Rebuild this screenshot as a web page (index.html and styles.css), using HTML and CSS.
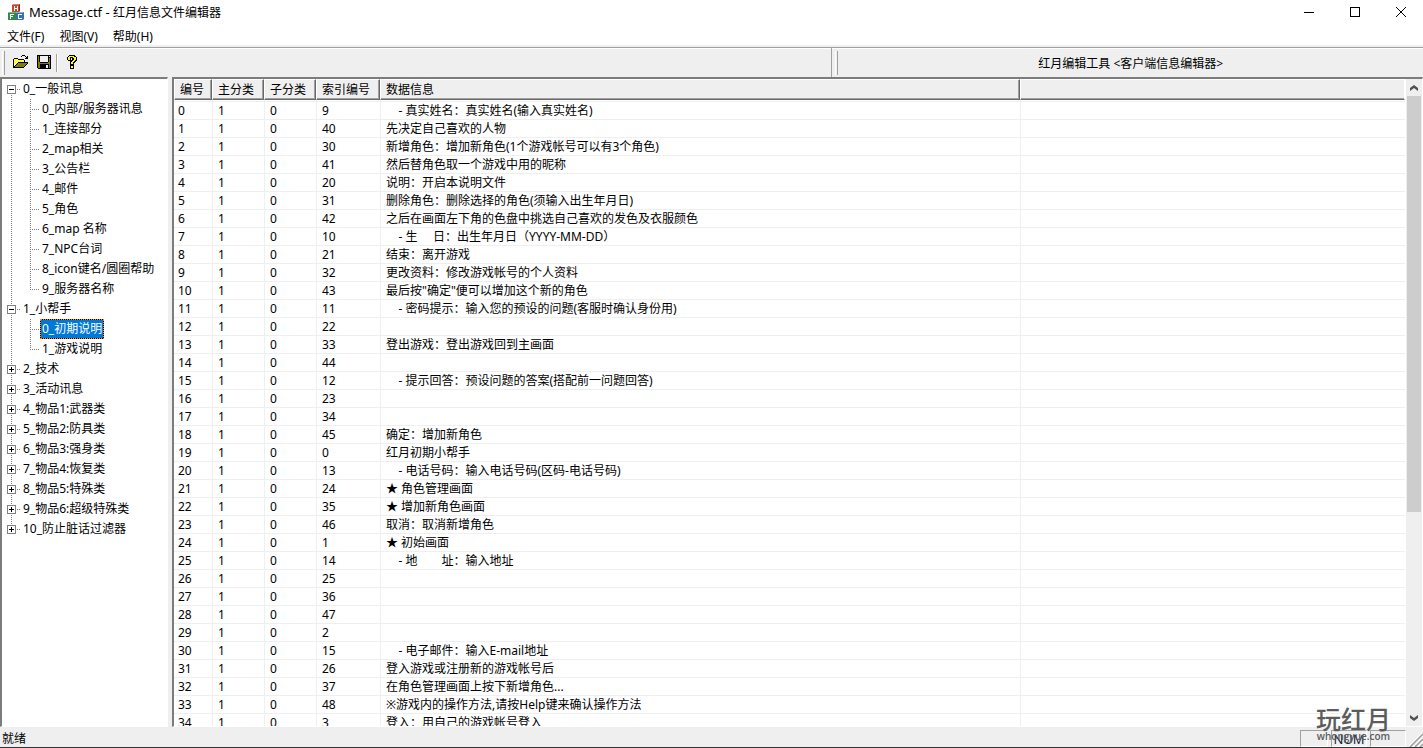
FILE: index.html
```html
<!DOCTYPE html>
<html lang="zh-CN">
<head>
<meta charset="utf-8">
<title>Message.ctf - 红月信息文件编辑器</title>
<link rel="stylesheet" href="styles.css">
</head>
<body>
<div class="app">
  <header class="titlebar">
    <svg class="app-icon" width="16" height="16" viewBox="0 0 16 16" aria-hidden="true">
      <path fill="#c4472f" d="M4 1l2-1h6l-1 8H4z"/><path fill="#e8775a" d="M4 1l2-1h6l-1 1z"/><path fill="#8b2a1d" d="M11 1l1-1v7l-1 1z"/>
      <path fill="#fff" d="M6 2h1v2h2V2h1v5H9V5H7v2H6z"/>
      <path fill="#2f8b4c" d="M0 9l1-1h7v8H0z"/><path fill="#74bd83" d="M0 9l1-1h7l-1 1z"/>
      <path fill="#fff" d="M2 10h4v1H3v1h2v1H3v2H2z"/>
      <path fill="#3471b5" d="M8 9l1-1h7v7l-1 1H8z"/><path fill="#81aedb" d="M8 9l1-1h7l-1 1z"/>
      <path fill="#fff" d="M10 10h4v1h-3v3h3v1h-4z"/>
    </svg>
    <h1 class="title"><span class="file-name">Message.ctf - </span>红月信息文件编辑器</h1>
    <div class="window-buttons">
      <button class="window-button" aria-label="最小化"><svg width="10" height="10" viewBox="0 0 10 10"><path d="M0 5.5h10"/></svg></button>
      <button class="window-button" aria-label="最大化"><svg width="10" height="10" viewBox="0 0 10 10"><path d="M.5.5h9v9h-9z"/></svg></button>
      <button class="window-button smooth" aria-label="关闭"><svg width="10" height="10" viewBox="0 0 10 10"><path d="M0 0l10 10M10 0L0 10"/></svg></button>
    </div>
  </header>
  <nav class="menubar">
    <button>文件(F)</button><button>视图(V)</button><button>帮助(H)</button>
  </nav>
  <div class="rebar">
    <div class="band tools">
      <span class="grip"></span>
      <button class="tool" aria-label="打开"><svg width="16" height="16" viewBox="0 0 16 16">
        <path fill="#ffff80" d="M1 4h4v1h6v3H4l-3 5z"/>
        <path stroke="#ffff00" stroke-dasharray="1 1" d="M1 5.5h10M2 6.5h9M1 7.5h10M2 8.5h3M1 9.5h3"/>
        <path fill="#808000" d="M5 9h9l-4 4H2z"/>
        <path stroke="#000" d="M9 1.5h3M8 2.5h1M12 2.5h1M14 2.5h1M13 3.5h2M1 4.5h4M12 4.5h3M0 5.5h1M5 5.5h6M11 6.5h1M11 7.5h1M5 8.5h10M4 9.5h1M14 9.5h1M3 10.5h1M13 10.5h1M2 11.5h1M12 11.5h1M1 12.5h1M11 12.5h1M0 13.5h11M.5 5v9"/>
      </svg></button>
      <button class="tool" aria-label="保存"><svg width="16" height="16" viewBox="0 0 16 16">
        <path fill="#000" d="M1 1h14v14H2l-1-1z"/><path fill="#808000" d="M2 2h1v6h1v1h8V8h1V4h1v10H2z"/><path fill="#efefef" d="M4 2h8v6H4zM13 2h1v1h-1z"/><path fill="#000" d="M4 10h9v4H4z"/><path fill="#efefef" d="M10 11h2v3h-2z"/>
      </svg></button>
      <span class="separator"></span>
      <button class="tool" aria-label="关于"><svg width="16" height="16" viewBox="0 0 16 16">
        <path fill="#000" d="M5 1h6v1h1v1h1v4h-1v1h-1v1h-1v2H6V7h1V6h1V4H7v3H4V6H3V3h1V2h1zM6 11h4v4H6z"/>
        <path fill="#ffff00" d="M5 2h5v1h2v3h-1v1h-1v1H9v2H7V8h1V7h1V6h1V4H9V3H6v3H4V3h1zM7 12h2v2H7z"/>
      </svg></button>
    </div>
    <div class="band caption"><span class="grip"></span><span class="caption-text">红月编辑工具 &lt;客户端信息编辑器&gt;</span></div>
  </div>
  <main class="workspace">
    <aside class="tree-panel">
      <ul class="tree">
        <li class="branch"><div class="node"><button class="expander" aria-label="折叠"></button><span class="label">0_一般讯息</span></div>
          <ul class="children">
            <li><a href="#">0_内部/服务器讯息</a></li>
            <li><a href="#">1_连接部分</a></li>
            <li><a href="#">2_map相关</a></li>
            <li><a href="#">3_公告栏</a></li>
            <li><a href="#">4_邮件</a></li>
            <li><a href="#">5_角色</a></li>
            <li><a href="#">6_map 名称</a></li>
            <li><a href="#">7_NPC台词</a></li>
            <li><a href="#">8_icon键名/圆圈帮助</a></li>
            <li><a href="#">9_服务器名称</a></li>
          </ul>
        </li>
        <li class="branch"><div class="node"><button class="expander" aria-label="折叠"></button><span class="label">1_小帮手</span></div>
          <ul class="children">
            <li><a href="#" class="selected">0_初期说明</a></li>
            <li><a href="#">1_游戏说明</a></li>
          </ul>
        </li>
        <li class="branch"><div class="node"><button class="expander closed" aria-label="展开"></button><span class="label">2_技术</span></div></li>
        <li class="branch"><div class="node"><button class="expander closed" aria-label="展开"></button><span class="label">3_活动讯息</span></div></li>
        <li class="branch"><div class="node"><button class="expander closed" aria-label="展开"></button><span class="label">4_物品1:武器类</span></div></li>
        <li class="branch"><div class="node"><button class="expander closed" aria-label="展开"></button><span class="label">5_物品2:防具类</span></div></li>
        <li class="branch"><div class="node"><button class="expander closed" aria-label="展开"></button><span class="label">6_物品3:强身类</span></div></li>
        <li class="branch"><div class="node"><button class="expander closed" aria-label="展开"></button><span class="label">7_物品4:恢复类</span></div></li>
        <li class="branch"><div class="node"><button class="expander closed" aria-label="展开"></button><span class="label">8_物品5:特殊类</span></div></li>
        <li class="branch"><div class="node"><button class="expander closed" aria-label="展开"></button><span class="label">9_物品6:超级特殊类</span></div></li>
        <li class="branch"><div class="node"><button class="expander closed" aria-label="展开"></button><span class="label">10_防止脏话过滤器</span></div></li>
      </ul>
    </aside>
    <section class="list-panel">
      <div class="list-view">
        <table class="messages">
          <colgroup><col class="c-id"><col class="c-type"><col class="c-type"><col class="c-index"><col class="c-text"><col></colgroup>
          <thead><tr><th>编号</th><th>主分类</th><th>子分类</th><th>索引编号</th><th>数据信息</th><th></th></tr></thead>
          <tbody>
            <tr><td>0</td><td>1</td><td>0</td><td>9</td><td>    - 真实姓名：真实姓名(输入真实姓名)</td><td></td></tr>
            <tr><td>1</td><td>1</td><td>0</td><td>40</td><td>先决定自己喜欢的人物</td><td></td></tr>
            <tr><td>2</td><td>1</td><td>0</td><td>30</td><td>新增角色：增加新角色(1个游戏帐号可以有3个角色)</td><td></td></tr>
            <tr><td>3</td><td>1</td><td>0</td><td>41</td><td>然后替角色取一个游戏中用的昵称</td><td></td></tr>
            <tr><td>4</td><td>1</td><td>0</td><td>20</td><td>说明：开启本说明文件</td><td></td></tr>
            <tr><td>5</td><td>1</td><td>0</td><td>31</td><td>删除角色：删除选择的角色(须输入出生年月日)</td><td></td></tr>
            <tr><td>6</td><td>1</td><td>0</td><td>42</td><td>之后在画面左下角的色盘中挑选自己喜欢的发色及衣服颜色</td><td></td></tr>
            <tr><td>7</td><td>1</td><td>0</td><td>10</td><td>    - 生     日：出生年月日（YYYY-MM-DD）</td><td></td></tr>
            <tr><td>8</td><td>1</td><td>0</td><td>21</td><td>结束：离开游戏</td><td></td></tr>
            <tr><td>9</td><td>1</td><td>0</td><td>32</td><td>更改资料：修改游戏帐号的个人资料</td><td></td></tr>
            <tr><td>10</td><td>1</td><td>0</td><td>43</td><td>最后按"确定"便可以增加这个新的角色</td><td></td></tr>
            <tr><td>11</td><td>1</td><td>0</td><td>11</td><td>    - 密码提示：输入您的预设的问题(客服时确认身份用)</td><td></td></tr>
            <tr><td>12</td><td>1</td><td>0</td><td>22</td><td></td><td></td></tr>
            <tr><td>13</td><td>1</td><td>0</td><td>33</td><td>登出游戏：登出游戏回到主画面</td><td></td></tr>
            <tr><td>14</td><td>1</td><td>0</td><td>44</td><td></td><td></td></tr>
            <tr><td>15</td><td>1</td><td>0</td><td>12</td><td>    - 提示回答：预设问题的答案(搭配前一问题回答)</td><td></td></tr>
            <tr><td>16</td><td>1</td><td>0</td><td>23</td><td></td><td></td></tr>
            <tr><td>17</td><td>1</td><td>0</td><td>34</td><td></td><td></td></tr>
            <tr><td>18</td><td>1</td><td>0</td><td>45</td><td>确定：增加新角色</td><td></td></tr>
            <tr><td>19</td><td>1</td><td>0</td><td>0</td><td>红月初期小帮手</td><td></td></tr>
            <tr><td>20</td><td>1</td><td>0</td><td>13</td><td>    - 电话号码：输入电话号码(区码-电话号码)</td><td></td></tr>
            <tr><td>21</td><td>1</td><td>0</td><td>24</td><td>★ 角色管理画面</td><td></td></tr>
            <tr><td>22</td><td>1</td><td>0</td><td>35</td><td>★ 增加新角色画面</td><td></td></tr>
            <tr><td>23</td><td>1</td><td>0</td><td>46</td><td>取消：取消新增角色</td><td></td></tr>
            <tr><td>24</td><td>1</td><td>0</td><td>1</td><td>★ 初始画面</td><td></td></tr>
            <tr><td>25</td><td>1</td><td>0</td><td>14</td><td>    - 地　　址：输入地址</td><td></td></tr>
            <tr><td>26</td><td>1</td><td>0</td><td>25</td><td></td><td></td></tr>
            <tr><td>27</td><td>1</td><td>0</td><td>36</td><td></td><td></td></tr>
            <tr><td>28</td><td>1</td><td>0</td><td>47</td><td></td><td></td></tr>
            <tr><td>29</td><td>1</td><td>0</td><td>2</td><td></td><td></td></tr>
            <tr><td>30</td><td>1</td><td>0</td><td>15</td><td>    - 电子邮件：输入E-mail地址</td><td></td></tr>
            <tr><td>31</td><td>1</td><td>0</td><td>26</td><td>登入游戏或注册新的游戏帐号后</td><td></td></tr>
            <tr><td>32</td><td>1</td><td>0</td><td>37</td><td>在角色管理画面上按下新增角色...</td><td></td></tr>
            <tr><td>33</td><td>1</td><td>0</td><td>48</td><td>※游戏内的操作方法,请按Help键来确认操作方法</td><td></td></tr>
            <tr><td>34</td><td>1</td><td>0</td><td>3</td><td>登入：用自己的游戏帐号登入</td><td></td></tr>
          </tbody>
        </table>
      </div>
      <div class="scrollbar">
        <button class="arrow" aria-label="向上滚动"><svg width="8" height="6" viewBox="0 0 8 6"><path d="M0 3l4-3 4 3v3L4 3 0 6z"/></svg></button>
        <div class="track"><div class="thumb"></div><div class="rest"></div></div>
        <button class="arrow" aria-label="向下滚动"><svg width="8" height="6" viewBox="0 0 8 6"><path d="M0 0l4 3 4-3v3L4 6 0 3z"/></svg></button>
      </div>
    </section>
  </main>
  <footer class="statusbar">
    <span class="status-text">就绪</span>
    <span class="pane narrow"></span><span class="pane">NUM</span><span class="pane"></span>
    <svg class="size-grip" width="14" height="14" viewBox="0 0 14 14" aria-hidden="true"><path stroke="#fff" d="M0 13L13 0M4 14L14 4M9 14l5-5"/><path stroke="#a0a0a0" stroke-width="1.5" d="M1 14L14 1M6 14l8-8M11 14l3-3"/></svg>
  </footer>
  <div class="watermark"><span class="mark-name">玩红月</span><span class="mark-site">whongyue.com</span></div>
</div>
</body>
</html>
```
FILE: styles.css
```css
* { box-sizing: border-box; }
body {
  margin: 0;
  font: 12px/18px "Noto Sans", "Noto Sans CJK SC", sans-serif;
  color: #000;
  background: #fff;
}
button {
  display: flex;
  align-items: center;
  justify-content: center;
  margin: 0;
  padding: 0;
  border: 0;
  background: none;
  font: inherit;
  color: inherit;
}
ul { margin: 0; padding: 0; list-style: none; }

.app {
  position: relative;
  display: flex;
  flex-direction: column;
  height: 100vh;
  overflow: hidden;
}

.titlebar { display: flex; align-items: center; height: 24px; flex: none; padding-left: 8px; }
.app-icon { margin-right: 5px; }
.title { flex: 1; margin: 0; font-size: 12px; font-weight: 400; line-height: 18px; }
.file-name { font-size: 13px; }
.window-buttons { display: flex; height: 22px; margin-right: -1px; }
.window-button { width: 46px; }
.window-button svg { fill: none; stroke: #000; shape-rendering: crispEdges; }
.window-button.smooth svg { shape-rendering: auto; }

.menubar { display: flex; gap: 15px; height: 21px; flex: none; padding: 4px 7px 0; }
.menubar button { height: 17px; }

.rebar {
  display: flex;
  height: 32px;
  flex: none;
  border-top: 2px solid #efefef;
  background: #efefef;
}
.band {
  display: flex;
  align-items: center;
  border-top: 1px solid #a0a0a0;
  box-shadow: inset 0 1px #fff;
}
.grip { width: 3px; height: 24px; border-left: 1px solid #fff; border-right: 1px solid #a0a0a0; }
.tools { flex: 833; padding-left: 2px; border-right: 1px solid #a0a0a0; }
.tool { width: 23px; height: 24px; padding-bottom: 2px; }
.tool svg { fill: none; shape-rendering: crispEdges; }
.tools .grip { margin-right: 4px; }
.separator { width: 2px; height: 18px; margin: 0 2px 0 1px; border-left: 1px solid #a0a0a0; border-right: 1px solid #fff; }
.caption { flex: 590; padding-left: 3px; }
.caption-text { flex: 1; padding-top: 3px; text-align: center; }

.workspace { display: flex; flex: 1; min-height: 0; gap: 4px; background: #efefef; }
.tree-panel, .list-panel {
  overflow: hidden;
  border: 1px solid #fff;
  border-top: 2px solid #7c7c7c;
  border-left: 2px solid #7c7c7c;
  background: #fff;
}
.tree-panel { width: 168px; flex: none; }
.list-panel { display: flex; flex: 1; min-width: 0; }

.branch { background: repeating-linear-gradient(#808080 0 1px, transparent 1px 2px) 9px 0 / 1px 100% no-repeat; }
.branch:first-child { background-position: 9px 10px; }
.branch:last-child { background-size: 1px 10px; }
.node { display: flex; align-items: center; height: 20px; padding-left: 5px; white-space: nowrap; }
.label { display: flex; align-items: center; }
.label::before {
  content: "";
  width: 4px;
  height: 1px;
  margin-right: 3px;
  background: repeating-linear-gradient(90deg, transparent 0 1px, #808080 1px 2px);
}
.expander {
  width: 9px;
  height: 9px;
  flex: none;
  border: 1px solid #808080;
  background: linear-gradient(#000, #000) center / 5px 1px no-repeat, #fff;
}
.expander.closed {
  background: linear-gradient(#000, #000) center / 5px 1px no-repeat, linear-gradient(#000, #000) center / 1px 5px no-repeat, #fff;
}
.children li {
  display: flex;
  height: 20px;
  padding-left: 38px;
  background:
    repeating-linear-gradient(#808080 0 1px, transparent 1px 2px) 28px 0 / 1px 100% no-repeat,
    repeating-linear-gradient(90deg, #808080 0 1px, transparent 1px 2px) 28px 10px / 10px 1px no-repeat;
}
.children li:last-child { background-size: 1px 10px, 10px 1px; }
.children a { padding: 1px 2px; line-height: 18px; color: #000; text-decoration: none; white-space: nowrap; }
.children .selected { padding: 0 1px; outline: 1px dotted #ff8728; outline-offset: -1px; border: 1px solid #000; background: #0078d7; color: #fff; }

.list-view { flex: 1; min-width: 0; overflow: hidden; }
.messages { width: 100%; table-layout: fixed; border-collapse: separate; border-spacing: 0; }
.c-id { width: 38px; }
.c-type { width: 52px; }
.c-index { width: 64px; }
.c-text { width: 640px; }
th, td { overflow: hidden; white-space: pre; text-align: left; font-weight: 400; }
th {
  height: 21px;
  padding: 0 0 0 5px;
  border-top: 1px solid #fff;
  border-left: 1px solid #fff;
  border-right: 1px solid #696969;
  border-bottom: 1px solid #696969;
  background: #efefef;
  box-shadow: inset -1px -1px #a0a0a0;
}
th:last-child { border-right-color: #fff; box-shadow: inset 0 -1px #a0a0a0; }
td { height: 18px; padding: 0 0 0 5px; line-height: 17px; border-left: 1px solid #efefef; border-bottom: 1px solid #efefef; }
td:first-child { padding-left: 4px; border-left: 0; }
tbody tr:first-child td { height: 20px; padding-top: 1px; background: linear-gradient(#efefef, #efefef) 0 1px / 100% 1px no-repeat; }

.scrollbar { display: flex; flex-direction: column; width: 17px; padding: 0 1px; background: #efefef; border-left: 1px solid #fff; }
.arrow { height: 17px; flex: none; }
.arrow svg { fill: #505050; }
.track { display: flex; flex-direction: column; flex: 1; }
.thumb { flex: 417; background: #cdcdcd; }
.rest { flex: 197; }

.statusbar {
  display: flex;
  align-items: flex-start;
  gap: 3px;
  height: 21px;
  flex: none;
  border-bottom: 1px solid #333;
  background: #efefef;
}
.status-text { flex: 1; padding: 3px 2px 0; }
.pane {
  width: 36px;
  height: 17px;
  margin-top: 3px;
  border: 1px solid #a0a0a0;
  border-right-color: #fff;
  border-bottom-color: #fff;
  color: #102040;
  font-size: 13px;
  line-height: 16px;
  text-align: center;
}
.narrow { width: 28px; }
.size-grip { margin: 6px 0 0; }

.watermark {
  position: absolute;
  right: 32px;
  bottom: 9px;
  display: flex;
  flex-direction: column;
  align-items: center;
  color: #5c5c5c;
  pointer-events: none;
}
.mark-name { font-size: 25px; line-height: 28px; font-weight: 500; }
.mark-site { font: 600 10px/6px "Open Sans", sans-serif; }
```
